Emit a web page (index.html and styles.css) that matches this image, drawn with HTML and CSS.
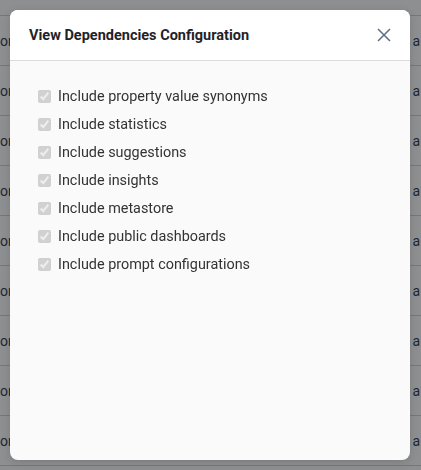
FILE: index.html
```html
<!DOCTYPE html>
<html lang="en">
<head>
  <meta charset="UTF-8">
  <title>View Dependencies Configuration</title>
  <link rel="stylesheet" href="styles.css">
</head>
<body>
  <div class="table">
    <div class="row first"></div>
    <div class="row"><span>or</span><span>a</span></div>
    <div class="row"><span>or</span><span>a</span></div>
    <div class="row"><span>or</span><span>a</span></div>
    <div class="row"><span>or</span><span>a</span></div>
    <div class="row"><span>or</span><span>a</span></div>
    <div class="row"><span>or</span><span>a</span></div>
    <div class="row"><span>or</span><span>a</span></div>
    <div class="row"><span>or</span><span>a</span></div>
    <div class="row"><span>or</span><span>a</span></div>
  </div>
  <div class="overlay"></div>
  <div class="modal">
    <div class="modal-header">
      <h3>View Dependencies Configuration</h3>
      <button class="close">
        <svg width="14" height="14" viewBox="0 0 14 14"><path d="M1 1L13 13M13 1L1 13" stroke="#5d6e81" stroke-width="1.5" fill="none"/></svg>
      </button>
    </div>
    <div class="modal-body">
      <label><input type="checkbox" checked disabled> Include property value synonyms</label>
      <label><input type="checkbox" checked disabled> Include statistics</label>
      <label><input type="checkbox" checked disabled> Include suggestions</label>
      <label><input type="checkbox" checked disabled> Include insights</label>
      <label><input type="checkbox" checked disabled> Include metastore</label>
      <label><input type="checkbox" checked disabled> Include public dashboards</label>
      <label><input type="checkbox" checked disabled> Include prompt configurations</label>
    </div>
  </div>
</body>
</html>
```

FILE: styles.css
```css
body {
  margin: 0;
  font-family: Roboto, "Liberation Sans", sans-serif;
  background: #fff;
  overflow: hidden;
}
.table {
  color: #1d2d44;
  font-size: 14px;
}
.row {
  height: 49px;
  border-bottom: 1px solid #d0d0d0;
  display: flex;
  justify-content: space-between;
  align-items: center;
  padding: 0 1px 0 0;
}
.row.first {
  height: 15px;
}
.overlay {
  position: fixed;
  inset: 0;
  background: rgba(30, 32, 36, 0.5);
}
.modal {
  position: fixed;
  left: 10px;
  top: 10px;
  width: 400px;
  height: 450px;
  background: #fafafa;
  border-radius: 8px;
  overflow: hidden;
  box-shadow: 0 2px 8px rgba(0, 0, 0, 0.15);
}
.modal-header {
  background: #fff;
  height: 50px;
  border-bottom: 1px solid #dcdcdc;
  display: flex;
  align-items: center;
  justify-content: space-between;
  padding: 0 19px;
}
.modal-header h3 {
  margin: 0;
  font-size: 14.5px;
  font-weight: 700;
  color: #1f2328;
}
.close {
  border: none;
  background: none;
  padding: 0;
  width: 14px;
  height: 14px;
  cursor: pointer;
}
.modal-body {
  padding: 25px 28px;
  display: flex;
  flex-direction: column;
  gap: 8px;
}
.modal-body label {
  display: flex;
  align-items: center;
  font-size: 14.4px;
  color: #333;
  height: 20px;
}
.modal-body input {
  margin: 0 7px 0 0;
  width: 13px;
  height: 13px;
}
```
